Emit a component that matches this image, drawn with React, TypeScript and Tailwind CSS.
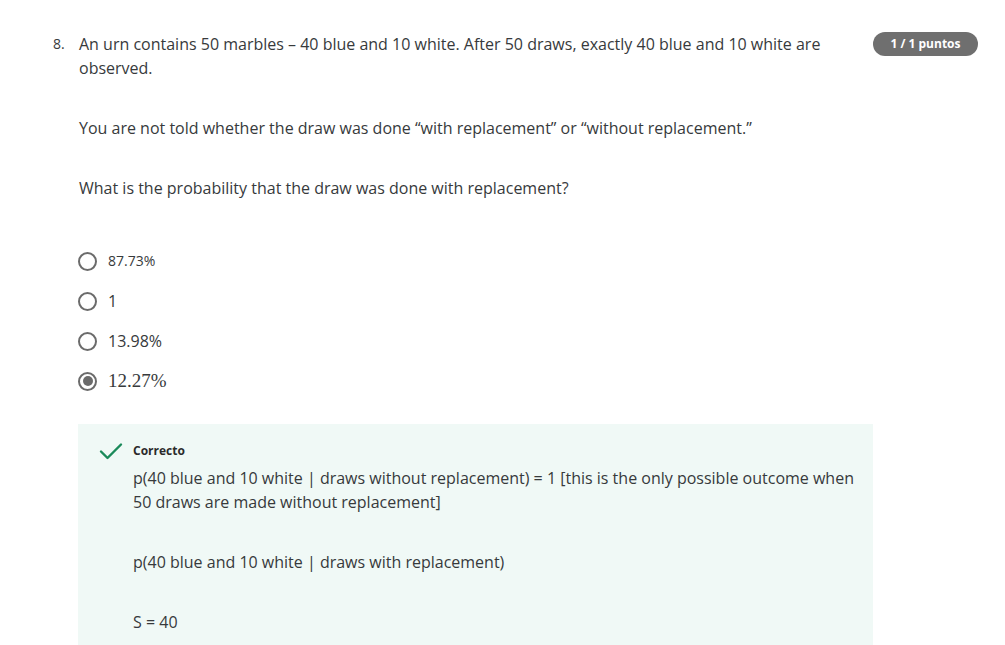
import React from "react";

// Pregunta de cuestionario con opciones y bloque de retroalimentación.

const OPTIONS = [
  { label: "87.73%", kind: "small", checked: false },
  { label: "1", kind: "base", checked: false },
  { label: "13.98%", kind: "base", checked: false },
  { label: "12.27%", kind: "math", checked: true },
];

function Radio({ checked }: { checked: boolean }) {
  return (
    <span className="flex h-[19px] w-[19px] shrink-0 items-center justify-center rounded-full border-2 border-[#6b6b6b] bg-white">
      {checked && <span className="h-[10px] w-[10px] rounded-full bg-[#6b6b6b]" />}
    </span>
  );
}

function Check() {
  return (
    <svg width="24" height="18" viewBox="0 0 24 18" className="shrink-0" aria-hidden>
      <path d="M2 9.5 L8.5 16 L22 2.5" fill="none" stroke="#1a8a5a" strokeWidth="2.4" strokeLinecap="round" strokeLinejoin="round" />
    </svg>
  );
}

export default function App() {
  return (
    <div className="min-h-screen w-full bg-white text-[#373a3c]" style={{ fontFamily: '"Open Sans", sans-serif' }}>
      <div className="flex pl-[53px] pt-[32px]">
        <div className="flex w-[820px] shrink-0">
          <div className="w-[26px] shrink-0 text-sm leading-6">8.</div>
          <div className="flex-1">
            <p className="text-base leading-6">
              An urn contains 50 marbles – 40 blue and 10 white. After 50 draws, exactly 40 blue and 10 white are
              observed.
            </p>
            <p className="mt-9 text-base leading-6">
              You are not told whether the draw was done “with replacement” or “without replacement.”
            </p>
            <p className="mt-9 text-base leading-6">What is the probability that the draw was done with replacement?</p>

            <div className="mt-[41px] flex flex-col">
              {OPTIONS.map((o) => (
                <div key={o.label} className="flex h-10 items-center gap-[11px] -ml-[1px]">
                  <Radio checked={o.checked} />
                  {o.kind === "math" ? (
                    <span className="text-[19px]" style={{ fontFamily: '"Liberation Serif", serif' }}>
                      {o.label}
                    </span>
                  ) : o.kind === "small" ? (
                    <span className="text-sm">{o.label}</span>
                  ) : (
                    <span className="text-base">{o.label}</span>
                  )}
                </div>
              ))}
            </div>

            <div className="mt-[23px] -ml-[1px] bg-[#f0f9f6] pb-6 pl-[21px] pr-3 pt-[17px]">
              <div className="flex items-center gap-[10px]">
                <Check />
                <span className="text-xs font-bold leading-5 text-[#2b2b2b]">Correcto</span>
              </div>
              <div className="pl-[34px] text-base leading-6">
                <p className="mt-[5px]">
                  p(40 blue and 10 white | draws without replacement) = 1 [this is the only possible outcome when 50
                  draws are made without replacement]
                </p>
                <p className="mt-9">p(40 blue and 10 white | draws with replacement)</p>
                <p className="mt-9">S = 40</p>
              </div>
            </div>
          </div>
        </div>
        <div className="shrink-0">
          <span className="flex h-6 w-[105px] items-center justify-center rounded-full bg-[#6f6f6f] text-xs font-bold text-white">
            1 / 1 puntos
          </span>
        </div>
      </div>
    </div>
  );
}
